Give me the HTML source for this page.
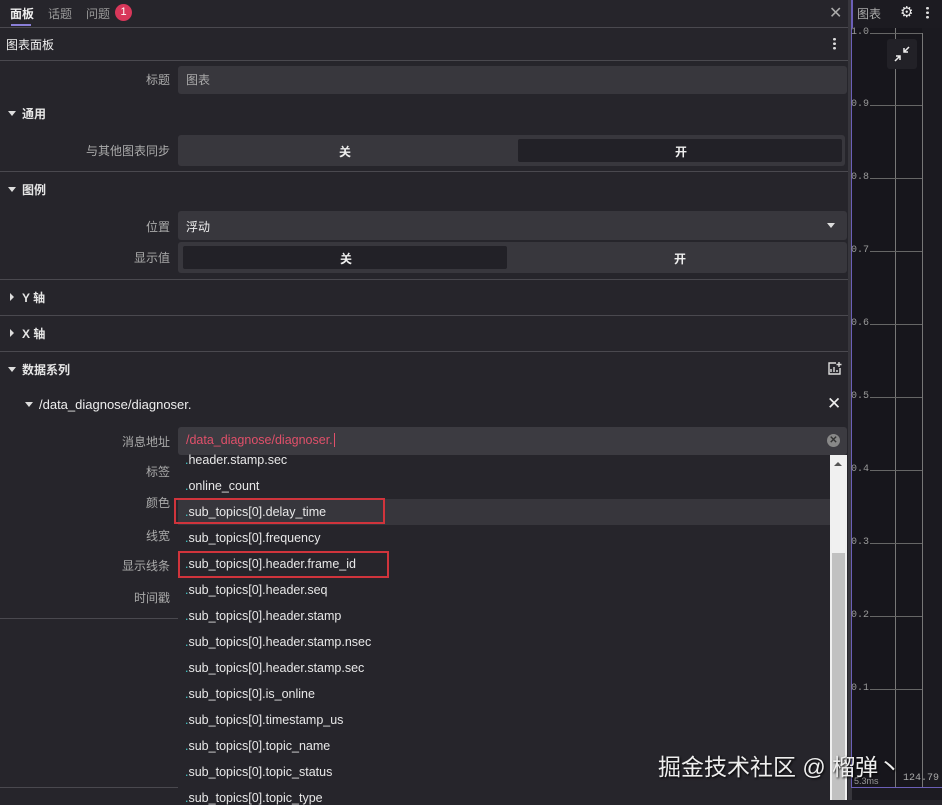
<!DOCTYPE html>
<html><head><meta charset="utf-8"><style>
*{margin:0;padding:0;box-sizing:border-box}
body{width:942px;height:800px;overflow:hidden;background:#26252b;font-family:"Liberation Sans","Noto Sans CJK SC",sans-serif;color:#ddd;position:relative;font-size:12px}
.a{position:absolute}
.hl{position:absolute;left:0;width:850px;height:1px;background:#4a494f}
.lbl{position:absolute;right:772px;color:#aaa;font-size:12px;text-align:right;white-space:nowrap}
.inp{position:absolute;left:178px;width:669px;background:#38373d;border-radius:3px}
.sec{position:absolute;left:8px;font-weight:bold;color:#e6e6e6;font-size:12px}
.tri{display:inline-block;width:0;height:0;border-left:4px solid transparent;border-right:4px solid transparent;border-top:5px solid #ddd;margin-right:6px;vertical-align:2px}
.trr{display:inline-block;width:0;height:0;border-top:4px solid transparent;border-bottom:4px solid transparent;border-left:4px solid #ddd;margin-right:8px;margin-left:2px;vertical-align:1px}
.it{position:absolute;left:185px;font-size:12.5px;color:#e8e8e8;white-space:nowrap}
.it b{color:#4cc;font-weight:normal}
.yl{position:absolute;left:851px;font-family:"Liberation Mono",monospace;font-size:10px;color:#999}
.gl{position:absolute;left:870px;width:52px;height:1px;background:#666}
</style></head><body>
<!-- tabs -->
<div class="a" style="left:10px;top:5px;font-weight:bold;color:#eee">面板</div>
<div class="a" style="left:11px;top:24px;width:20px;height:2px;background:#8a7fd8"></div>
<div class="a" style="left:48px;top:5px;color:#999">话题</div>
<div class="a" style="left:86px;top:5px;color:#999">问题</div>
<div class="a" style="left:115px;top:4px;width:17px;height:17px;border-radius:50%;background:#d8375a;color:#fff;font-size:11px;text-align:center;line-height:17px">1</div>
<div class="a" style="left:829px;top:3px;color:#aaa;font-size:16px">✕</div>
<div class="hl" style="top:27px"></div>
<div class="a" style="left:6px;top:36px;color:#eee">图表面板</div>
<div class="a" style="left:833px;top:37px;width:3px;height:13px;background:radial-gradient(circle,#ddd 1.3px,transparent 1.5px) 0 0/3px 4.5px"></div>
<div class="hl" style="top:60px"></div>
<div class="lbl" style="top:71px">标题</div>
<div class="inp" style="top:66px;height:28px"><span class="a" style="left:8px;top:5px;color:#aaa">图表</span></div>
<div class="sec" style="top:105px"><span class="tri"></span>通用</div>
<div class="lbl" style="top:142px">与其他图表同步</div>
<div class="inp" style="top:135px;height:31px;width:667px"><span class="a" style="left:161px;top:8px;font-weight:bold;color:#eee">关</span><div class="a" style="left:340px;top:4px;width:324px;height:23px;background:#222127;border-radius:2px"><span class="a" style="left:157px;top:4px;font-weight:bold;color:#eee">开</span></div></div>
<div class="hl" style="top:171px"></div>
<div class="sec" style="top:181px"><span class="tri"></span>图例</div>
<div class="lbl" style="top:218px">位置</div>
<div class="inp" style="top:211px;height:29px"><span class="a" style="left:8px;top:7px;color:#eee">浮动</span><span class="a" style="right:12px;top:12px;border-left:4px solid transparent;border-right:4px solid transparent;border-top:5px solid #ddd"></span></div>
<div class="lbl" style="top:249px">显示值</div>
<div class="inp" style="top:242px;height:31px"><div class="a" style="left:5px;top:4px;width:324px;height:23px;background:#222127;border-radius:2px"><span class="a" style="left:157px;top:4px;font-weight:bold;color:#eee">关</span></div><span class="a" style="left:496px;top:8px;font-weight:bold;color:#eee">开</span></div>
<div class="hl" style="top:279px"></div>
<div class="sec" style="top:289px"><span class="trr"></span>Y 轴</div>
<div class="hl" style="top:315px"></div>
<div class="sec" style="top:325px"><span class="trr"></span>X 轴</div>
<div class="hl" style="top:351px"></div>
<div class="sec" style="top:361px"><span class="tri"></span>数据系列</div>
<svg class="a" style="left:827px;top:361px" width="15" height="15" viewBox="0 0 15 15" fill="none" stroke="#ddd" stroke-width="1.4"><path d="M9 2H2v11h11V7M4 11V8M7 11V6M10 11V9M12 1v5M9.5 3.5h5"/></svg>
<div class="a" style="left:25px;top:397px;font-size:13px;color:#eee"><span class="tri"></span>/data_diagnose/diagnoser.</div>
<div class="a" style="left:827px;top:394px;color:#eee;font-size:17px">✕</div>
<div class="lbl" style="top:433px">消息地址</div>
<div class="inp" style="top:427px;height:28px;background:#3c3b41"><span class="a" style="left:8px;top:6px;color:#e0506a;font-size:12.5px">/data_diagnose/diagnoser.<span style="border-left:1px solid #e0506a;margin-left:1px"></span></span><span class="a" style="right:7px;top:7px;width:13px;height:13px;border-radius:50%;background:#888;color:#333;font-size:10px;line-height:13px;text-align:center;font-weight:bold">✕</span></div>
<div class="lbl" style="top:463px">标签</div>
<div class="lbl" style="top:494px">颜色</div>
<div class="lbl" style="top:527px">线宽</div>
<div class="lbl" style="top:557px">显示线条</div>
<div class="lbl" style="top:589px">时间戳</div>
<div class="a" style="left:0;top:618px;width:178px;height:1px;background:#4a494f"></div>
<div class="a" style="left:0;top:787px;width:178px;height:1px;background:#4a494f"></div>
<!-- dropdown -->
<div class="a" style="left:178px;top:455px;width:652px;height:345px;background:#26252b;overflow:hidden">
<div class="a" style="left:0;top:44px;width:652px;height:26px;background:#37363c"></div>
</div>
<div class="it" style="top:453px"><b>.</b>header.stamp.sec</div>
<div class="it" style="top:479px"><b>.</b>online_count</div>
<div class="it" style="top:505px"><b>.</b>sub_topics[0].delay_time</div>
<div class="it" style="top:531px"><b>.</b>sub_topics[0].frequency</div>
<div class="it" style="top:557px"><b>.</b>sub_topics[0].header.frame_id</div>
<div class="it" style="top:583px"><b>.</b>sub_topics[0].header.seq</div>
<div class="it" style="top:609px"><b>.</b>sub_topics[0].header.stamp</div>
<div class="it" style="top:635px"><b>.</b>sub_topics[0].header.stamp.nsec</div>
<div class="it" style="top:661px"><b>.</b>sub_topics[0].header.stamp.sec</div>
<div class="it" style="top:687px"><b>.</b>sub_topics[0].is_online</div>
<div class="it" style="top:713px"><b>.</b>sub_topics[0].timestamp_us</div>
<div class="it" style="top:739px"><b>.</b>sub_topics[0].topic_name</div>
<div class="it" style="top:765px"><b>.</b>sub_topics[0].topic_status</div>
<div class="it" style="top:791px"><b>.</b>sub_topics[0].topic_type</div>
<div class="a" style="left:174px;top:498px;width:211px;height:26px;border:2px solid #d0343c"></div>
<div class="a" style="left:178px;top:551px;width:211px;height:27px;border:2px solid #d0343c"></div>
<div class="a" style="left:830px;top:455px;width:17px;height:345px;background:#f0f0f0"></div>
<div class="a" style="left:834px;top:462px;border-left:4px solid transparent;border-right:4px solid transparent;border-bottom:4px solid #555"></div>
<div class="a" style="left:832px;top:553px;width:13px;height:247px;background:#c1c1c1"></div>
<!-- right panel -->
<div class="a" style="left:848px;top:0;width:4px;height:800px;background:#37363c"></div>
<div class="a" style="left:852px;top:0;width:90px;height:800px;background:#1c1b21"></div>
<div class="a" style="left:851px;top:0;width:2px;height:788px;background:#6b5fb8"></div>
<div class="a" style="left:852px;top:28px;width:90px;height:759px;background:#17161c"></div>
<div class="a" style="left:851px;top:787px;width:91px;height:1px;background:#6b5fb8"></div>
<div class="a" style="left:857px;top:5px;color:#aaa">图表</div>
<div class="a" style="left:900px;top:3px;color:#eee;font-size:15px">⚙</div>
<div class="a" style="left:926px;top:6px;width:3px;height:13px;background:radial-gradient(circle,#ddd 1.3px,transparent 1.5px) 0 0/3px 4.5px"></div>
<div class="a" style="left:895px;top:28px;width:1px;height:759px;background:#777"></div>
<div class="a" style="left:922px;top:33px;width:1px;height:754px;background:#777"></div>
<div class="a" style="left:922px;top:28px;width:20px;height:759px;background:#1b1a20"></div>
<div class="a" style="left:922px;top:33px;width:1px;height:754px;background:#777"></div>
<div class="a" style="left:887px;top:39px;width:30px;height:30px;background:#222127;border-radius:3px"></div>
<svg class="a" style="left:893px;top:45px" width="18" height="18" viewBox="0 0 18 18" fill="none" stroke="#eee" stroke-width="1.5"><path d="M16 2l-5 5M11 3v4h4M2 16l5-5M3 11h4v4"/></svg>
<div class="yl" style="top:27px">1.0</div><div class="gl" style="top:33px"></div>
<div class="yl" style="top:99px">0.9</div><div class="gl" style="top:105px"></div>
<div class="yl" style="top:172px">0.8</div><div class="gl" style="top:178px"></div>
<div class="yl" style="top:245px">0.7</div><div class="gl" style="top:251px"></div>
<div class="yl" style="top:318px">0.6</div><div class="gl" style="top:324px"></div>
<div class="yl" style="top:391px">0.5</div><div class="gl" style="top:397px"></div>
<div class="yl" style="top:464px">0.4</div><div class="gl" style="top:470px"></div>
<div class="yl" style="top:537px">0.3</div><div class="gl" style="top:543px"></div>
<div class="yl" style="top:610px">0.2</div><div class="gl" style="top:616px"></div>
<div class="yl" style="top:683px">0.1</div><div class="gl" style="top:689px"></div>
<div class="a" style="left:854px;top:776px;font-size:9px;color:#999">5.3ms</div>
<div class="a" style="left:903px;top:773px;font-size:10px;color:#aaa;font-family:'Liberation Mono',monospace">124.79</div>
<div class="a" style="left:658px;top:748px;font-size:23px;color:#eee;text-shadow:1px 1px 2px #000;white-space:nowrap">掘金技术社区 @ 榴弹丶</div>
</body></html>
